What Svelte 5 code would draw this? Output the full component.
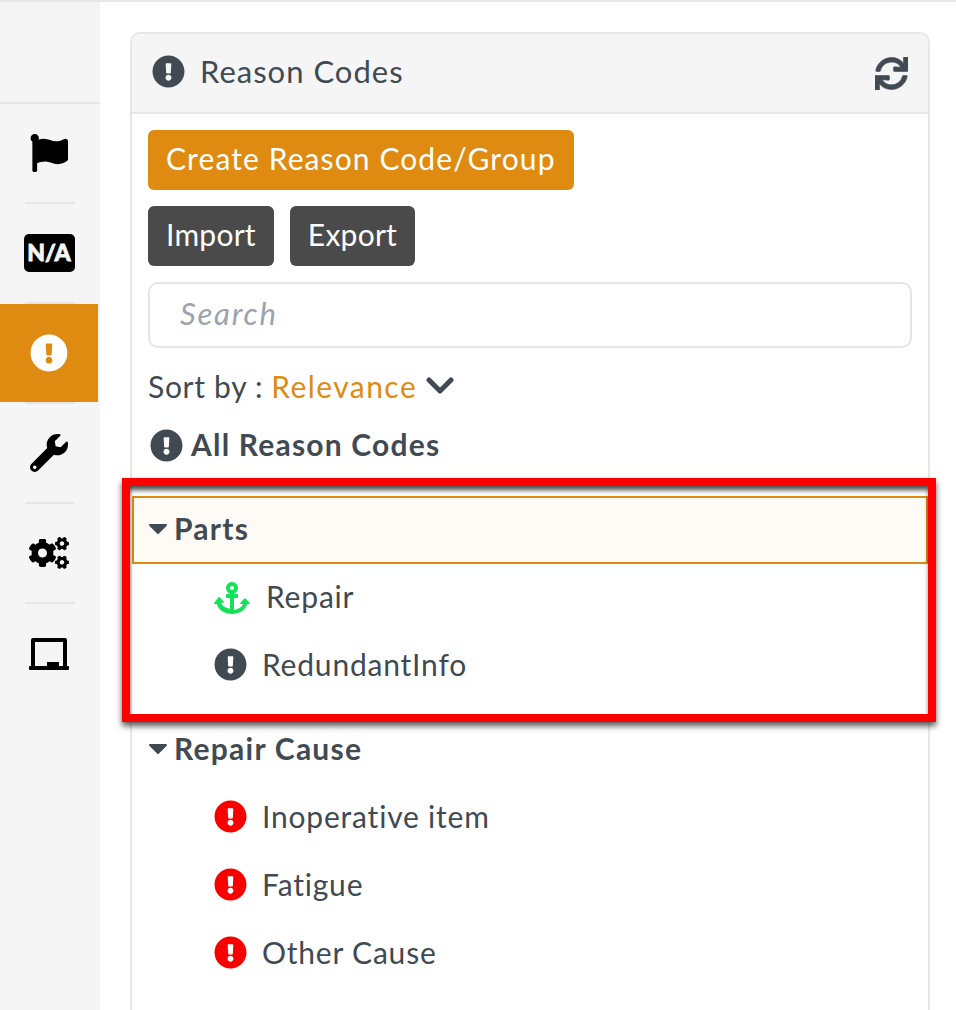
<script>
  const groups = [
    { name: 'Parts', selected: true, items: [
      { label: 'Repair', icon: 'anchor' },
      { label: 'RedundantInfo', icon: 'info' }
    ]},
    { name: 'Repair Cause', selected: false, items: [
      { label: 'Inoperative item', icon: 'alert' },
      { label: 'Fatigue', icon: 'alert' },
      { label: 'Other Cause', icon: 'alert' }
    ]}
  ];
  const excl = 'M504 256c0 136.997-111.043 248-248 248S8 392.997 8 256C8 119.083 119.043 8 256 8s248 111.083 248 248zm-248 50c-25.405 0-46 20.595-46 46s20.595 46 46 46 46-20.595 46-46-20.595-46-46-46zm-43.673-165.346l7.418 136c.347 6.364 5.609 11.346 11.982 11.346h48.546c6.373 0 11.635-4.982 11.982-11.346l7.418-136c.375-6.874-5.098-12.654-11.982-12.654h-63.383c-6.884 0-12.356 5.78-11.981 12.654z';
  const flag = 'M349.565 98.783C295.978 98.783 251.721 64 184.348 64c-24.955 0-47.309 4.384-68.045 12.013a55.947 55.947 0 0 0 3.586-23.562C118.117 24.015 94.806 1.206 66.338.048 34.345-1.254 8 24.296 8 56c0 19.026 9.497 35.825 24 45.945V488c0 13.255 10.745 24 24 24h16c13.255 0 24-10.745 24-24v-94.4c28.311-12.064 63.582-22.122 114.435-22.122 53.588 0 97.844 34.783 165.217 34.783 48.169 0 86.667-16.294 122.505-40.858C506.84 359.452 512 349.571 512 339.045v-243.1c0-23.393-24.269-38.87-45.485-29.016-34.338 15.948-76.454 31.854-116.95 31.854z';
  const wrench = 'M507.73 109.1c-2.24-9.03-13.54-12.09-20.12-5.51l-74.36 74.36-67.88-11.31-11.31-67.88 74.36-74.36c6.62-6.62 3.43-17.9-5.66-20.16-47.38-11.74-99.55.91-136.58 37.93-39.64 39.64-50.55 97.1-34.05 147.2L18.74 402.76c-24.99 24.99-24.99 65.51 0 90.5 24.99 24.99 65.51 24.99 90.5 0l213.21-213.21c50.12 16.71 107.47 5.68 147.37-34.22 37.07-37.07 49.7-89.32 37.91-136.73zM64 472c-13.25 0-24-10.75-24-24 0-13.26 10.75-24 24-24s24 10.74 24 24c0 13.25-10.75 24-24 24z';
  const cogs = 'M512.1 191l-8.2 14.3c-3 5.3-9.4 7.5-15.1 5.4-11.8-4.4-22.6-10.7-32.1-18.6-4.6-3.8-5.8-10.5-2.8-15.7l8.2-14.3c-6.9-8-12.3-17.3-15.9-27.4h-16.5c-6 0-11.2-4.3-12.2-10.3-2-12-2.1-24.6 0-37.1 1-6 6.2-10.4 12.2-10.4h16.5c3.6-10.1 9-19.4 15.9-27.4l-8.2-14.3c-3-5.2-1.9-11.9 2.8-15.7 9.5-7.9 20.4-14.2 32.1-18.6 5.7-2.1 12.1.1 15.1 5.4l8.2 14.3c10.5-1.9 21.2-1.9 31.7 0L552 6.3c3-5.3 9.4-7.5 15.1-5.4 11.8 4.4 22.6 10.7 32.1 18.6 4.6 3.8 5.8 10.5 2.8 15.7l-8.2 14.3c6.9 8 12.3 17.3 15.9 27.4h16.5c6 0 11.2 4.3 12.2 10.3 2 12 2.1 24.6 0 37.1-1 6-6.2 10.4-12.2 10.4h-16.5c-3.6 10.1-9 19.4-15.9 27.4l8.2 14.3c3 5.2 1.9 11.9-2.8 15.7-9.5 7.9-20.4 14.2-32.1 18.6-5.7 2.1-12.1-.1-15.1-5.4l-8.2-14.3c-10.4 1.9-21.2 1.9-31.7 0zm-10.5-58.8c38.5 29.6 82.4-14.3 52.8-52.8-38.5-29.7-82.4 14.3-52.8 52.8zM386.3 286.1l33.7 16.8c10.1 5.8 14.5 18.1 10.5 29.1-8.9 24.2-26.4 46.4-42.6 65.8-7.4 8.9-20.2 11.1-30.3 5.3l-29.1-16.8c-16 13.7-34.6 24.6-54.9 31.7v33.6c0 11.6-8.3 21.6-19.7 23.6-24.6 4.2-50.4 4.4-75.9 0-11.5-2-20-11.9-20-23.6V418c-20.3-7.2-38.9-18-54.9-31.7L74 403c-10 5.8-22.9 3.6-30.3-5.3-16.2-19.4-33.3-41.6-42.2-65.7-4-10.9.4-23.2 10.5-29.1l33.3-16.8c-3.9-20.9-3.9-42.4 0-63.4L12 205.8c-10.1-5.8-14.6-18.1-10.5-29 8.9-24.2 26-46.4 42.2-65.8 7.4-8.9 20.2-11.1 30.3-5.3l29.1 16.8c16-13.7 34.6-24.6 54.9-31.7V57.1c0-11.5 8.2-21.5 19.6-23.5 24.6-4.2 50.5-4.4 76-.1 11.5 2 20 11.9 20 23.6v33.6c20.3 7.2 38.9 18 54.9 31.7l29.1-16.8c10-5.8 22.9-3.6 30.3 5.3 16.2 19.4 33.2 41.6 42.1 65.8 4 10.9.1 23.2-10 29.1l-33.7 16.8c3.9 21 3.9 42.5 0 63.5zm-117.6 21.1c59.2-77-28.7-164.9-105.7-105.7-59.2 77 28.7 164.9 105.7 105.7zm243.4 182.7l-8.2 14.3c-3 5.3-9.4 7.5-15.1 5.4-11.8-4.4-22.6-10.7-32.1-18.6-4.6-3.8-5.8-10.5-2.8-15.7l8.2-14.3c-6.9-8-12.3-17.3-15.9-27.4h-16.5c-6 0-11.2-4.3-12.2-10.3-2-12-2.1-24.6 0-37.1 1-6 6.2-10.4 12.2-10.4h16.5c3.6-10.1 9-19.4 15.9-27.4l-8.2-14.3c-3-5.2-1.9-11.9 2.8-15.7 9.5-7.9 20.4-14.2 32.1-18.6 5.7-2.1 12.1.1 15.1 5.4l8.2 14.3c10.5-1.9 21.2-1.9 31.7 0l8.2-14.3c3-5.3 9.4-7.5 15.1-5.4 11.8 4.4 22.6 10.7 32.1 18.6 4.6 3.8 5.8 10.5 2.8 15.7l-8.2 14.3c6.9 8 12.3 17.3 15.9 27.4h16.5c6 0 11.2 4.3 12.2 10.3 2 12 2.1 24.6 0 37.1-1 6-6.2 10.4-12.2 10.4h-16.5c-3.6 10.1-9 19.4-15.9 27.4l8.2 14.3c3 5.2 1.9 11.9-2.8 15.7-9.5 7.9-20.4 14.2-32.1 18.6-5.7 2.1-12.1-.1-15.1-5.4l-8.2-14.3c-10.4 1.9-21.2 1.9-31.7 0zM501.6 431c38.5 29.6 82.4-14.3 52.8-52.8-38.5-29.6-82.4 14.3-52.8 52.8z';
  const sync = 'M440.65 12.57l4 82.77A247.16 247.16 0 0 0 255.83 8C134.73 8 33.91 94.92 12.29 209.82A12 12 0 0 0 24.09 224h49.05a12 12 0 0 0 11.67-9.26 175.91 175.91 0 0 1 317-56.94l-101.46-4.86a12 12 0 0 0-12.57 12v47.41a12 12 0 0 0 12 12H500a12 12 0 0 0 12-12V12a12 12 0 0 0-12-12h-47.37a12 12 0 0 0-11.98 12.57zM255.83 432a175.61 175.61 0 0 1-146-77.8l101.8 4.87a12 12 0 0 0 12.57-12v-47.4a12 12 0 0 0-12-12H12a12 12 0 0 0-12 12V500a12 12 0 0 0 12 12h47.35a12 12 0 0 0 12-12.6l-4.15-82.57A247.17 247.17 0 0 0 255.83 504c121.11 0 221.93-86.92 243.55-201.82a12 12 0 0 0-11.8-14.18h-49.05a12 12 0 0 0-11.67 9.26A175.86 175.86 0 0 1 255.83 432z';
  const anchor = 'M12.971 352h32.394C67.172 454.735 181.944 512 288 512c106.229 0 220.853-57.38 242.635-160h32.394c10.691 0 16.045-12.926 8.485-20.485l-67.029-67.029c-4.686-4.686-12.284-4.686-16.971 0l-67.029 67.029c-7.56 7.56-2.206 20.485 8.485 20.485h35.146c-20.29 54.317-84.963 86.588-144.117 94.015V256h52c6.627 0 12-5.373 12-12v-40c0-6.627-5.373-12-12-12h-52v-5.47c37.281-13.178 63.995-48.725 64-90.518C384.005 43.772 341.605.738 289.37.01 235.723-.739 192 42.525 192 96c0 41.798 26.716 77.35 64 90.53V192h-52c-6.627 0-12 5.373-12 12v40c0 6.627 5.373 12 12 12h52v170.015c-59.001-7.407-123.807-39.598-144.117-94.015h35.146c10.691 0 16.045-12.926 8.485-20.485l-67.029-67.029c-4.686-4.686-12.284-4.686-16.971 0L4.485 331.515C-3.074 339.074 2.28 352 12.971 352zM288 64c17.645 0 32 14.355 32 32s-14.355 32-32 32-32-14.355-32-32 14.355-32 32-32z';
</script>

<div class="page">
  <nav class="rail">
    <div class="rail-top"></div>
    <div class="rail-item"><svg class="i38" viewBox="0 0 512 512"><path d={flag} /></svg></div>
    <div class="rail-sep"></div>
    <div class="rail-item"><div class="na">N/A</div></div>
    <div class="rail-sep"></div>
    <div class="rail-item active"><svg class="i38" viewBox="0 0 512 512"><path d={excl} /></svg></div>
    <div class="rail-sep"></div>
    <div class="rail-item"><svg class="i38" viewBox="0 0 512 512"><path d={wrench} /></svg></div>
    <div class="rail-sep"></div>
    <div class="rail-item"><svg class="cogs" viewBox="0 0 640 512"><path d={cogs} /></svg></div>
    <div class="rail-sep"></div>
    <div class="rail-item">
      <svg class="board" viewBox="0 0 40 32">
        <path d="M4 0h32a2 2 0 0 1 2 2v26h-4V4H6v24H2V2a2 2 0 0 1 2-2z" />
        <path d="M1 28h17v-4h12v4h9a1 1 0 0 1 1 1v2a1 1 0 0 1-1 1H1a1 1 0 0 1-1-1v-2a1 1 0 0 1 1-1z" />
      </svg>
    </div>
  </nav>

  <main class="main">
    <section class="panel">
      <header class="panel-head">
        <div class="title">
          <svg class="ic" viewBox="0 0 512 512"><path d={excl} /></svg>
          <span class="up">Reason Codes</span>
        </div>
        <svg class="sync" viewBox="0 0 512 512"><path d={sync} /></svg>
      </header>
      <div class="panel-body">
        <button class="btn primary">Create Reason Code/Group</button>
        <div class="btn-row">
          <button class="btn dark">Import</button>
          <button class="btn dark">Export</button>
        </div>
        <input class="search" placeholder="Search" />
        <div class="sort">
          <span class="up sort-key">Sort by :</span>
          <span class="up sort-val">Relevance</span>
          <svg class="chev" viewBox="0 0 28 18"><path d="M3 3l11 11L25 3" /></svg>
        </div>
        <div class="all">
          <svg class="ic" viewBox="0 0 512 512"><path d={excl} /></svg>
          <span class="up">All Reason Codes</span>
        </div>

        <div class="tree">
          {#each groups as g}
            <div class="group" class:selected={g.selected}>
              <svg class="caret" viewBox="0 0 18 10"><path d="M1 0h16a1 1 0 0 1 .7 1.7l-8 8a1 1 0 0 1-1.4 0l-8-8A1 1 0 0 1 1 0z" /></svg>
              <span class="up">{g.name}</span>
            </div>
            {#each g.items as it}
              <div class="leaf">
                {#if it.icon === 'anchor'}
                  <svg class="anchor" viewBox="0 0 576 512"><path d={anchor} /></svg>
                  <span class="up after-anchor">{it.label}</span>
                {:else}
                  <svg class="ic leaf-ic" class:red={it.icon === 'alert'} viewBox="0 0 512 512"><path d={excl} /></svg>
                  <span class="up">{it.label}</span>
                {/if}
              </div>
            {/each}
            <div class="group-gap"></div>
          {/each}
        </div>
      </div>
    </section>
  </main>

  <div class="callout"></div>
</div>

<style>
  :global(body) { margin: 0; background: #fff; }
  .page {
    position: relative;
    display: flex;
    height: 1008px;
    border-top: 2px solid #e7e7e7;
    overflow: hidden;
    font-family: Lato, "Open Sans", sans-serif;
    color: #414a52;
  }
  .up { margin-bottom: 4px; }
  .rail { width: 100px; flex: none; background: #f5f5f5; }
  .rail-top { height: 100px; border-bottom: 2px solid #e5e5e5; }
  .rail-item { width: 98px; height: 98px; display: flex; align-items: center; justify-content: center; color: #000; }
  .rail-item svg { fill: currentColor; display: block; }
  .rail-item.active { background: #df8b12; color: #fff; }
  .rail-sep { width: 50px; height: 2px; margin-left: 25px; background: #e5e5e5; }
  .i38 { width: 38px; height: 38px; }
  .cogs { width: 40px; height: 32px; }
  .board { width: 40px; height: 32px; margin-top: 2px; }
  .na {
    width: 51px; height: 38px; border-radius: 5px; background: #000; color: #f5f5f5;
    display: flex; align-items: center; justify-content: center;
    font-weight: 900; font-size: 23px; line-height: 1; padding-bottom: 1px; box-sizing: border-box;
    -webkit-text-stroke: 0.8px #f5f5f5;
  }

  .main { flex: 1; padding: 30px 0 0 30px; min-width: 0; }
  .panel {
    width: 796px; min-height: 1100px;
    border: 2px solid #e7e7e7; border-radius: 10px;
  }
  .panel-head {
    height: 78px; box-sizing: content-box; padding: 0 20px;
    display: flex; align-items: center; justify-content: space-between;
    background: #f5f5f5; border-bottom: 2px solid #e7e7e7;
    border-radius: 8px 8px 0 0;
  }
  .title { display: flex; align-items: center; gap: 15px; font-size: 31px; letter-spacing: 1px; }
  .title svg { margin-top: -3px; }
  svg { fill: currentColor; flex: none; }
  .ic { width: 33px; height: 33px; display: block; }
  .leaf-ic { margin-bottom: 4px; }
  .red { color: #f80000; }
  .sync { width: 33px; height: 33px; stroke: currentColor; stroke-width: 10; }
  .panel-body { padding: 16px; }
  .btn {
    display: block; height: 60px; padding: 0 18px 4px; border: 0; border-radius: 6px; box-sizing: border-box;
    font: 400 30px/56px Lato, sans-serif; color: #fff;
  }
  .primary { background: #df8b12; letter-spacing: 1.1px; }
  .dark { background: #4a4a4a; letter-spacing: 0.25px; }
  .btn-row { display: flex; gap: 16px; margin: 16px 0; }
  .search {
    display: block; width: 100%; height: 66px; box-sizing: border-box;
    padding: 0 30px 4px; border: 2px solid #e5e5e5; border-radius: 10px;
    font: italic 400 31px Lato, sans-serif; letter-spacing: 1.8px; outline: 0; background: #fff;
  }
  .search::placeholder { color: #9ca3af; opacity: 1; }
  .sort {
    height: 40px; margin-top: 20px; display: flex; align-items: center; gap: 8px;
    font-size: 30px;
  }
  .sort-key { letter-spacing: 0.7px; }
  .sort-val { color: #df8b12; letter-spacing: 1.45px; }
  .chev { width: 28px; height: 18px; margin: 0 0 4px 1px; fill: none; stroke: currentColor; stroke-width: 5; stroke-linecap: round; stroke-linejoin: round; }
  .all {
    height: 40px; margin-top: 18px; padding-left: 2px; display: flex; align-items: center; gap: 8px;
    font-size: 30px; font-weight: 700; letter-spacing: 1.2px;
  }
  .all svg { margin-bottom: 2px; }
  .tree { margin: 30px -16px 0; }
  .group {
    height: 68px; box-sizing: border-box; display: flex; align-items: center; gap: 7px;
    padding-left: 15px; border: 2px solid transparent;
    font-size: 30px; font-weight: 700; letter-spacing: 1.25px;
  }
  .group.selected { background: #fefaf6; border-color: #df8b12; }
  .caret { width: 18px; height: 10px; margin-top: -2px; }
  .leaf {
    height: 68px; display: flex; align-items: center; gap: 15px; padding-left: 82px;
    font-size: 30px; letter-spacing: 0.8px;
  }
  .anchor { width: 36px; height: 32px; color: #14e35a; }
  .after-anchor { margin-left: 1px; }
  .group-gap { height: 16px; }

  .callout {
    position: absolute; left: 122px; top: 476px; width: 814px; height: 244px; box-sizing: border-box;
    border: 8px solid #f00;
    box-shadow: 0 4px 6px rgba(0,0,0,.65), inset 0 5px 5px -1px rgba(0,0,0,.7);
    pointer-events: none;
  }
</style>
